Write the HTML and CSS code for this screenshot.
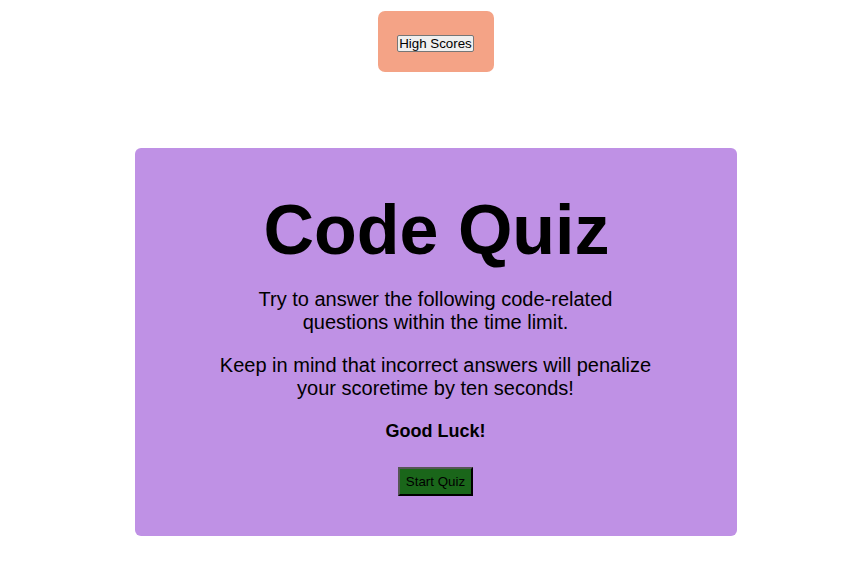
FILE: index.html
```html
<!DOCTYPE html>
<html>
<head>
<meta charset="utf-8">
<link rel="stylesheet" href="styles.css">
</head>
<body>
<header class="top">
  <div class="scores-box"><button class="scores-btn">High Scores</button></div>
</header>
<main class="card">
  <h1 class="title">Code Quiz</h1>
  <p class="intro">Try to answer the following code-related questions within the time limit.</p>
  <p class="intro">Keep in mind that incorrect answers will penalize your scoretime by ten seconds!</p>
  <p class="luck">Good Luck!</p>
  <button class="start-btn">Start Quiz</button>
</main>
</body>
</html>
```
FILE: styles.css
```css
html, body { margin: 0; padding: 0; background: #fff; }
body { font-family: "Liberation Sans", Arial, sans-serif; color: #000; padding-left: 10px; }
.top { display: flex; justify-content: center; padding-top: 11px; }
.scores-box {
  width: 116px; height: 61px; background: #f4a386; border-radius: 7px;
  display: flex; align-items: center; justify-content: center;
}
.scores-btn {
  font-family: "Liberation Sans", Arial, sans-serif; font-size: 13.33px;
  padding: 0 1px; margin-top: 4px; border: 1px solid #767676; border-radius: 2px;
  background: #efefef; color: #000; line-height: 15px;
}
.card {
  width: 602px; margin: 76px auto 0; background: #bf91e5; border-radius: 6px;
  display: flex; flex-direction: column; align-items: center; padding: 40px 0 40px; box-sizing: border-box; min-height: 388px;
}
.title { font-size: 70px; font-weight: bold; margin: 0 0 16px 2px; line-height: 1.2; }
.intro { font-size: 20px; max-width: 440px; text-align: center; margin: 0 0 20px; line-height: 23px; }
.luck { font-size: 18px; font-weight: bold; margin: 1px 0 25px; }
.start-btn {
  font-family: "Liberation Sans", Arial, sans-serif; font-size: 13.33px;
  background: #1a661a; color: #000; border: 2px outset #555; padding: 5px 6px;
}
```
